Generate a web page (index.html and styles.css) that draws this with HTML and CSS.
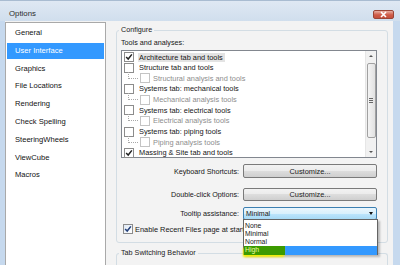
FILE: index.html
```html
<!DOCTYPE html>
<html lang="en">
<head>
  <meta charset="UTF-8" />
  <title>Options</title>
  <link rel="stylesheet" href="styles.css">
</head>
<body>
  <div class="window">
    <div class="titlebar">
      <span class="title">Options</span>
      <span class="close">
        <svg width="9" height="7" viewBox="0 0 9 7"><path d="M2 1l5 5M7 1L2 6" stroke="#fff" stroke-width="1.6"/></svg>
      </span>
    </div>

    <div class="client">
      <ul class="nav">
        <li>General</li>
        <li class="active">User Interface</li>
        <li>Graphics</li>
        <li>File Locations</li>
        <li>Rendering</li>
        <li>Check Spelling</li>
        <li>SteeringWheels</li>
        <li>ViewCube</li>
        <li>Macros</li>
      </ul>

      <div class="pane">
        <fieldset class="group">
          <legend>Configure</legend>
          <div class="caption">Tools and analyses:</div>

          <div class="listbox">
            <ul class="items">
              <li class="item"><span class="cb"><svg viewBox="0 0 7 7"><path d="M1 3.5l1.8 1.8L6 1.2" stroke="#222" stroke-width="1.3" fill="none"/></svg></span><span class="focus">Architecture tab and tools</span></li>
              <li class="item"><span class="cb"></span>Structure tab and tools</li>
              <li class="item child"><span class="tree"></span><span class="cb"></span>Structural analysis and tools</li>
              <li class="item"><span class="cb"></span>Systems tab: mechanical tools</li>
              <li class="item child"><span class="tree"></span><span class="cb"></span>Mechanical analysis tools</li>
              <li class="item"><span class="cb"></span>Systems tab: electrical tools</li>
              <li class="item child"><span class="tree"></span><span class="cb"></span>Electrical analysis tools</li>
              <li class="item"><span class="cb"></span>Systems tab: piping tools</li>
              <li class="item child"><span class="tree"></span><span class="cb"></span>Piping analysis tools</li>
              <li class="item"><span class="cb"><svg viewBox="0 0 7 7"><path d="M1 3.5l1.8 1.8L6 1.2" stroke="#222" stroke-width="1.3" fill="none"/></svg></span>Massing &amp; Site tab and tools</li>
            </ul>
            <div class="scrollbar">
              <span class="arrow up"></span>
              <span class="thumb"><span class="grip"></span></span>
              <span class="arrow down"></span>
            </div>
          </div>

          <div class="setting first">
            <label>Keyboard Shortcuts:</label>
            <button>Customize...</button>
          </div>
          <div class="setting second">
            <label>Double-click Options:</label>
            <button>Customize...</button>
          </div>
          <div class="setting third">
            <label>Tooltip assistance:</label>
            <div class="select">
              <span>Minimal</span>
              <span class="caret"></span>
              <ul class="popup">
                <li>None</li>
                <li>Minimal</li>
                <li>Normal</li>
                <li class="picked"><span class="marker">High</span></li>
              </ul>
            </div>
          </div>

          <div class="startup">
            <span class="cb blue"><svg viewBox="0 0 7 7"><path d="M1 3.5l1.8 1.8L6 1.2" stroke="#24407a" stroke-width="1.4" fill="none"/></svg></span>
            Enable Recent Files page at startup
          </div>
        </fieldset>

        <fieldset class="group tabs">
          <legend>Tab Switching Behavior</legend>
        </fieldset>
      </div>
    </div>
  </div>
</body>
</html>
```

FILE: styles.css
```css
:root {
  --frame: #c6d9ee;
  --face: #f3f3f3;
  --text: #161616;
  --select: #3399ff;
}
body {
  margin: 0;
  width: 400px;
  height: 265px;
  overflow: hidden;
  background: var(--frame);
  font-family: "Liberation Sans", Arial, sans-serif;
  color: var(--text);
}
.window {
  height: 265px;
  display: flex;
  flex-direction: column;
}
.titlebar {
  flex: 0 0 21px;
  box-sizing: border-box;
  display: flex;
  align-items: flex-start;
  justify-content: space-between;
  padding: 8px 6px 0 9px;
  background: linear-gradient(#dfe8f3, #d0deed);
  border-top: 1px solid #a9bcd1;
}
.title {
  font-size: 7.8px;
  line-height: 10px;
  color: #2a2a2a;
}
.close {
  width: 21px;
  height: 9px;
  box-sizing: border-box;
  margin-top: 1px;
  display: flex;
  align-items: center;
  justify-content: center;
  border: 1px solid #9a4536;
  border-radius: 2px;
  background: linear-gradient(#e9b0a3, #cf5b47 55%, #c4503c);
}
.client {
  flex: 1;
  min-height: 0;
  overflow: hidden;
  display: flex;
  margin: 0 7px 0 5px;
  background: var(--face);
}

/* left category list */
.nav {
  list-style: none;
  margin: 1px 0 0;
  padding: 2px 1px 0;
  width: 97px;
  background: #fff;
  border: 1px solid #a9a9a9;
  border-bottom: none;
}
.nav li {
  height: 16px;
  line-height: 16px;
  margin-bottom: 1.8px;
  padding-left: 8px;
  font-size: 7.6px;
  color: #111;
}
.nav li.active {
  background: var(--select);
  color: #fff;
}

/* right side */
.pane {
  flex: 1;
  padding: 5px 5px 0 10px;
}
.group {
  margin: 0;
  padding: 4px 10px 8px 4px;
  border: 1px solid #d3dde4;
  border-radius: 3px;
  min-width: 0;
}
.group legend {
  padding: 0 2px;
  margin-left: -2px;
  font-size: 7.2px;
  line-height: 8px;
  color: #1a1a1a;
}
.caption {
  font-size: 7.2px;
  line-height: 10px;
  margin-bottom: 2px;
}
.listbox {
  display: flex;
  height: 108px;
  box-sizing: border-box;
  border: 1px solid #82878f;
  background: #fff;
}
.items {
  flex: 1;
  list-style: none;
  margin: 0;
  padding: 0.7px 0 0 2px;
}
.item {
  display: flex;
  align-items: center;
  height: 10.67px;
  font-size: 7.4px;
  white-space: nowrap;
}
.item.child {
  padding-left: 4px;
  color: #8d8d8d;
}
.cb {
  flex: 0 0 auto;
  width: 8px;
  height: 8px;
  margin-right: 5px;
  border: 1px solid #8c8c8c;
  background: #fff;
  display: flex;
}
.cb svg {
  width: 100%;
  height: 100%;
}
.child .cb {
  border-color: #c4c4c4;
  margin-left: 2px;
  margin-right: 3px;
}
.tree {
  width: 9px;
  height: 6px;
  margin-bottom: 6px;
  border-left: 1px dotted #a8a8a8;
  border-bottom: 1px dotted #a8a8a8;
}
.focus {
  background: #e3e3e3;
  margin-left: -1px;
  padding: 0 2px 0 1px;
}
.scrollbar {
  width: 10px;
  display: flex;
  flex-direction: column;
  align-items: center;
  background: #f1f1f1;
  border-left: 1px solid #e6e6e6;
}
.arrow {
  height: 10px;
  width: 100%;
  position: relative;
}
.arrow::after {
  content: "";
  position: absolute;
  left: 3px;
  top: 4px;
  border-left: 2px solid transparent;
  border-right: 2px solid transparent;
}
.arrow.up::after { border-bottom: 2px solid #555; }
.arrow.down::after { border-top: 2px solid #555; }
.thumb {
  width: 9px;
  height: 75px;
  margin-top: 2px;
  box-sizing: border-box;
  border: 1px solid #a1a1a1;
  border-radius: 2px;
  background: linear-gradient(90deg, #f4f4f4, #e1e1e1);
  display: flex;
  align-items: center;
  justify-content: center;
}
.grip {
  width: 4px;
  height: 5px;
  background: repeating-linear-gradient(#666 0 1px, transparent 1px 2px);
}
.scrollbar .down { margin-top: auto; }

/* settings rows */
.setting {
  display: flex;
  align-items: center;
  gap: 4px;
}
.setting.first { margin-top: 6px; height: 14px; }
.setting.second { margin-top: 10px; height: 13px; }
.setting.third { margin-top: 6px; height: 13px; }
.setting label {
  width: 118px;
  text-align: right;
  font-size: 7.2px;
}
.setting button {
  flex: 1;
  height: 100%;
  padding: 0;
  font-family: inherit;
  font-size: 7.4px;
  color: #222;
  border: 1px solid #7a7a7a;
  border-radius: 2px;
  background: linear-gradient(#f2f2f2, #ebebeb 50%, #dddddd 50%, #cfcfcf);
}
.select {
  flex: 1;
  height: 100%;
  box-sizing: border-box;
  position: relative;
  display: flex;
  align-items: center;
  padding-left: 2px;
  font-size: 7px;
  border: 1px solid #3c7fb1;
  border-radius: 2px;
  background: linear-gradient(#eaf6fd, #d9f0fc 50%, #bee6fd 50%, #a7d9f5);
}
.caret {
  margin-left: auto;
  margin-right: 3px;
  border-left: 2.5px solid transparent;
  border-right: 2.5px solid transparent;
  border-top: 3px solid #111;
}
.popup {
  position: absolute;
  top: 100%;
  left: -1px;
  right: -2px;
  margin: 0;
  padding: 1.5px 0 0;
  list-style: none;
  height: 36px;
  box-sizing: border-box;
  background: #fff;
  border: 1px solid #646464;
  box-shadow: 2px 2px 2px rgba(0, 0, 0, 0.25);
}
.popup li {
  height: 8.33px;
  line-height: 8px;
  padding-left: 1px;
  font-size: 6.8px;
}
.popup li.picked {
  background: var(--select);
  line-height: 8.33px;
}
.marker {
  display: inline-block;
  width: 40px;
  margin-left: -1px;
  padding-left: 1px;
  background: #3c9a00;
  color: #f2ffa0;
  box-shadow: -1px 2px 2px #f4f000;
}
.startup {
  display: flex;
  align-items: center;
  height: 10px;
  margin-top: 4px;
  padding-left: 2px;
  font-size: 7.4px;
  white-space: nowrap;
}
.startup .cb {
  margin-right: 2px;
  background: linear-gradient(135deg, #dfe9f5, #fff);
}
.group.tabs {
  margin-top: 6px;
  height: 30px;
  border-bottom: none;
}
```
